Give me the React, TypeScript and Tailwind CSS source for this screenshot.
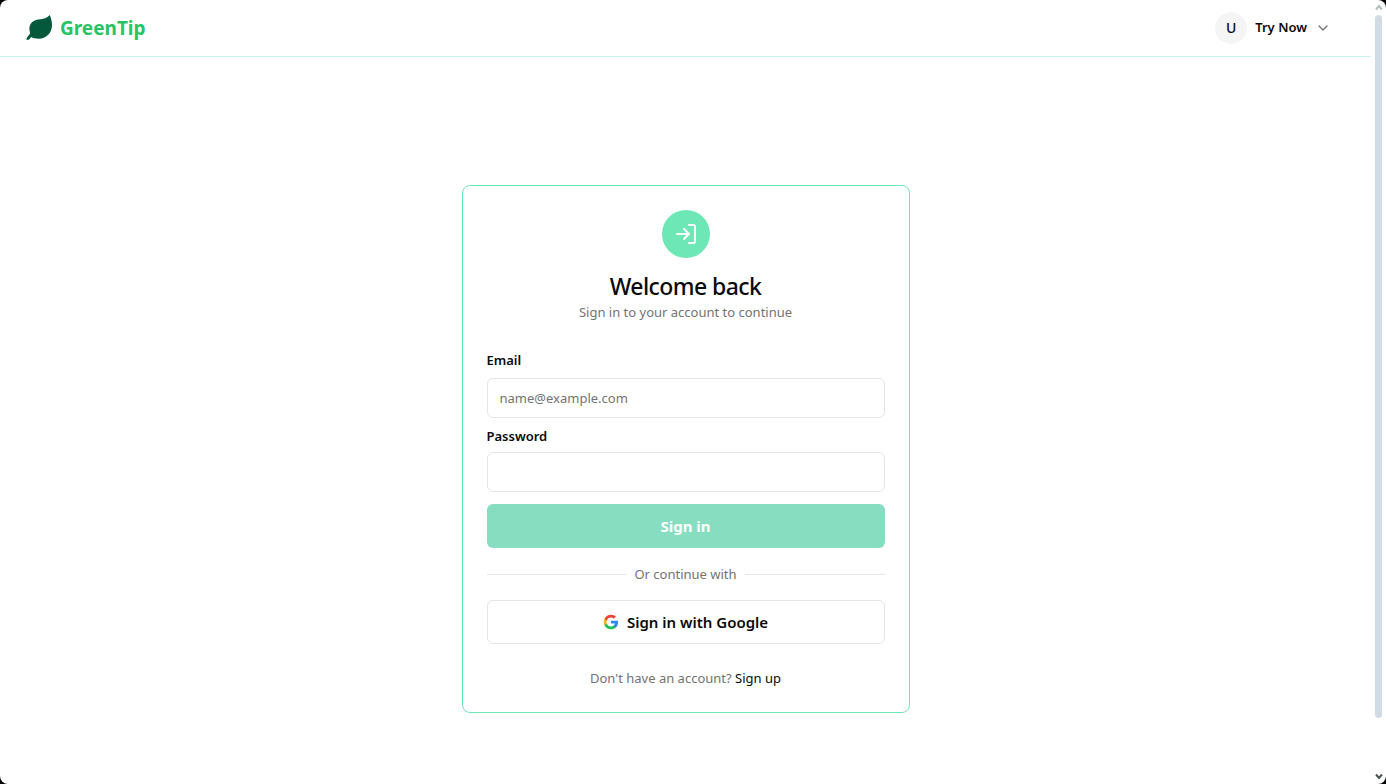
import { useState } from "react";
import { ChevronDown } from "lucide-react";

const Leaf = () => (
  <svg className="size-7" viewBox="0 0 28 28" fill="#04593c" aria-hidden="true">
    <path d="M25.800 1C27 4 28.200 8 28 11.800c-.4 7.700-6 12.900-13.200 12.900-3.300 0-5.800-.6-7.600-1.700-.9.800-1.300 1.600-1.800 2.300L3.600 26c-.4-.5-.8-.7-1.400-.6.5-1.700 1.500-3 3-4.600.9-1 1-1.600.6-3C4.900 14.200 5.400 10.700 8 8.200c2.300-2.200 5.400-2.700 8.600-3C20.200 4.800 23.400 4 25.800 1Z" />
  </svg>
);

const EnterIcon = () => (
  <svg
    className="size-6"
    viewBox="0 0 24 24"
    fill="none"
    stroke="white"
    strokeWidth="2"
    strokeLinecap="round"
    strokeLinejoin="round"
    aria-hidden="true"
  >
    <path d="M3 12h12" />
    <path d="M10 7l5 5-5 5" />
    <path d="M15 3h4.500c.8 0 1.500.7 1.500 1.500v15c0 .8-.7 1.500-1.500 1.500H15" />
  </svg>
);

const GoogleIcon = () => (
  <svg className="size-4" viewBox="0 0 24 24" aria-hidden="true">
    <path fill="#2f88ec" d="M22.560 12.250c0-.78-.07-1.530-.2-2.250H12v4.260h5.920c-.26 1.370-1.040 2.530-2.210 3.310v2.770h3.570c2.080-1.920 3.280-4.740 3.280-8.090z" />
    <path fill="#22c05a" d="M12 23c2.970 0 5.460-.98 7.280-2.660l-3.570-2.770c-.98.66-2.230 1.060-3.710 1.060-2.860 0-5.290-1.930-6.160-4.530H2.180v2.840C3.990 20.530 7.700 23 12 23z" />
    <path fill="#fbb32a" d="M5.840 14.090c-.22-.66-.35-1.360-.35-2.090s.13-1.430.35-2.090V7.070H2.180C1.430 8.550 1 10.220 1 12s.43 3.450 1.180 4.930l3.660-2.840z" />
    <path fill="#ee4438" d="M12 5.380c1.620 0 3.060.56 4.210 1.640l3.150-3.150C17.450 2.090 14.970 1 12 1 7.700 1 3.990 3.470 2.180 7.070l3.660 2.840c.87-2.600 3.300-4.530 6.160-4.530z" />
  </svg>
);

const Header = () => (
  <header className="flex h-[57px] shrink-0 items-center justify-between border-b border-[#c5f7e2] pr-10 pl-6">
    <a href="#" className="flex items-center gap-2">
      <Leaf />
      <span className="text-[19px] leading-7 font-bold text-[#27c463]">GreenTip</span>
    </a>
    <button type="button" className="flex items-center gap-2 text-[13px] font-semibold">
      <span className="flex size-8 items-center justify-center rounded-full bg-[#f5f5f5] text-sm font-medium">U</span>
      Try Now
      <ChevronDown className="size-4 text-[#737373]" />
    </button>
  </header>
);

const LoginCard = () => {
  const [email, setEmail] = useState("");
  const [password, setPassword] = useState("");

  return (
    <div className="w-full max-w-md rounded-lg border border-[#6ee7b7] p-6">
      <div className="flex flex-col items-center text-center">
        <div className="flex size-12 items-center justify-center rounded-full bg-[#6ee7b7]">
          <EnterIcon />
        </div>
        <h1 className="mt-3 text-[23px] leading-8 font-medium tracking-tight">Welcome back</h1>
        <p className="text-[13px] leading-5 text-[#737373]">Sign in to your account to continue</p>
      </div>

      <form className="mt-7 flex flex-col" onSubmit={(e) => e.preventDefault()}>
        <label htmlFor="email" className="text-[13px] leading-5 font-semibold">
          Email
        </label>
        <input
          id="email"
          type="email"
          placeholder="name@example.com"
          value={email}
          onChange={(e) => setEmail(e.target.value)}
          className="mt-2 h-10 w-full rounded-md border border-[#e5e5e5] px-3 text-[13px] placeholder:text-[#737373]"
        />
        <label htmlFor="password" className="mt-2 text-[13px] leading-5 font-semibold">
          Password
        </label>
        <input
          id="password"
          type="password"
          value={password}
          onChange={(e) => setPassword(e.target.value)}
          className="mt-1.5 h-10 w-full rounded-md border border-[#e5e5e5] px-3 text-[13px]"
        />
        <button type="submit" className="mt-3 h-11 rounded-md bg-[#87ddbf] text-[15px] font-bold text-white">
          Sign in
        </button>
      </form>

      <div className="mt-4 flex items-center gap-2 text-[13px] leading-5 text-[#737373]">
        <span className="h-px flex-1 bg-[#e5e5e5]" />
        Or continue with
        <span className="h-px flex-1 bg-[#e5e5e5]" />
      </div>

      <button
        type="button"
        className="mt-4 flex h-11 w-full items-center justify-center gap-2 rounded-md border border-[#e5e5e5] text-[15px] font-semibold"
      >
        <GoogleIcon />
        Sign in with Google
      </button>

      <p className="mt-6 text-center text-[13px] leading-5 text-[#737373]">
        Don't have an account?{" "}
        <a href="#" className="text-[#0a0a0a]">
          Sign up
        </a>
      </p>
    </div>
  );
};

const ScrollTrack = () => (
  <div className="flex w-[15px] shrink-0 flex-col items-center" aria-hidden="true">
    <svg className="h-[15px] w-2" viewBox="0 0 8 15" fill="none" stroke="#b4bdb9" strokeWidth="2">
      <path d="M1 9.500 4 6l3 3.500" />
    </svg>
    <div className="w-[7px] flex-1 rounded-full bg-[#d1dbe4]" />
    <div className="flex h-[66px] items-end">
      <svg className="h-[15px] w-2" viewBox="0 0 8 15" fill="none" stroke="#4b5350" strokeWidth="2">
        <path d="M1 5.500 4 9l3-3.500" />
      </svg>
    </div>
  </div>
);

export default function App() {
  return (
    <div className="h-screen bg-black">
      <div className="flex h-full overflow-hidden rounded-lg bg-white font-['Noto_Sans','Open_Sans',sans-serif] text-[#0a0a0a]">
        <div className="flex min-w-0 flex-1 flex-col overflow-hidden">
          <Header />
          <main className="flex min-h-screen shrink-0 items-center justify-center">
            <LoginCard />
          </main>
        </div>
        <ScrollTrack />
      </div>
    </div>
  );
}
